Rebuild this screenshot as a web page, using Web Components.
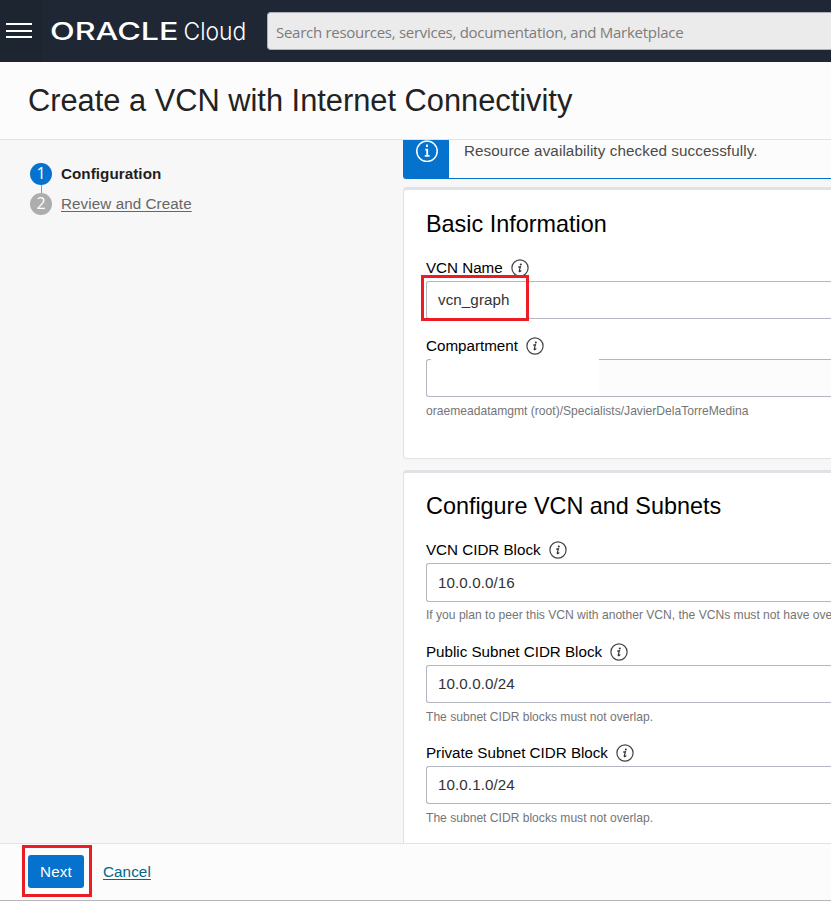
<!DOCTYPE html>
<html lang="en">
<head>
<meta charset="utf-8">
<title>Create a VCN with Internet Connectivity</title>
<style>
html,body{margin:0;height:100%}
body{overflow:hidden;background:#f7f7f7;font-family:"Liberation Sans",Arial,sans-serif;font-size:15.2px;color:#000}
</style>
</head>
<body>
<vcn-wizard></vcn-wizard>
<script>
function define(name, html) {
  const tpl = document.createElement('template');
  tpl.innerHTML = html;
  customElements.define(name, class extends HTMLElement {
    constructor() {
      super();
      this.attachShadow({mode: 'open'}).appendChild(tpl.content.cloneNode(true));
    }
  });
}

define('info-icon', `
<style>:host{display:block;width:18px;height:18px}svg{display:block}</style>
<svg width="18" height="18" viewBox="0 0 18 18" fill="none" stroke="#454545">
  <circle cx="9" cy="9" r="8.1" stroke-width="1.2"/>
  <circle cx="9.8" cy="5.4" r="1" fill="#333" stroke="none"/>
  <path d="M7.2 8.2L9.4 7.8L8.2 12.1Q8.1 13 9.1 12.4L10.3 11.6" stroke="#333" stroke-width="1.2"/>
</svg>`);

define('cloud-header', `
<style>
:host{display:flex;align-items:center;height:62px;background:#1e2733;flex:none}
.menu{width:42px;height:62px;box-sizing:border-box;padding:23px 0 0 6px;background:#1d2531}
svg{display:block;flex:none}
.search{flex:1;box-sizing:border-box;height:38px;margin-left:17px;border:1px solid #aab3bb;border-right:0;border-radius:4px 0 0 4px;background:#ebebeb;
  padding-left:8px;font:15px/39px "Open Sans",sans-serif;letter-spacing:-.28px;color:#7c7c7c;white-space:nowrap}
</style>
<div class="menu"><svg width="26" height="15" fill="#fff"><path d="M0 0h26v2H0zM0 7h26v2H0zM0 13h26v2H0z"/></svg></div>
<svg width="208" height="62" fill="#fff">
  <text x="8" y="40" font-family="Inter,sans-serif" font-weight="500" font-size="23.6" textLength="128.5" lengthAdjust="spacingAndGlyphs">ORACLE</text>
  <text x="141.5" y="40" font-family="Inter,sans-serif" font-weight="300" font-size="24.4" textLength="62.8" lengthAdjust="spacingAndGlyphs">Cloud</text>
</svg>
<div class="search">Search resources, services, documentation, and Marketplace</div>`);

define('page-title', `
<style>:host{display:block;box-sizing:border-box;height:78px;flex:none;background:#fcfcfc;border-bottom:1px solid #e2e2e2;padding-left:28px}
h1{margin:0;font-size:30.8px;font-weight:400;line-height:77px;color:#222;white-space:nowrap}</style>
<h1><slot></slot></h1>`);

define('wizard-step', `
<style>
:host{display:flex;height:22px;gap:9px;color:#666;white-space:nowrap}
.n{width:22px;height:22px;border-radius:50%;background:#adadad;color:#fff;text-align:center;font:16px/21px "Open Sans",sans-serif}
.t{line-height:22px;text-decoration:underline;text-underline-offset:2px;letter-spacing:.09px}
:host([active]){color:#1e1e1e}
:host([active]) .n{background:#0572ce}
:host([active]) .t{font-weight:700;text-decoration:none;letter-spacing:.06px}
</style>
<div class="n"><slot name="n"></slot></div><div class="t"><slot></slot></div>`);

define('step-list', `
<style>:host{display:flex;flex-direction:column;width:403px;flex:none;box-sizing:border-box;padding:23px 0 0 30px}
.line{width:1px;height:8px;margin-left:11px;background:#999}</style>
<slot name="first"></slot><div class="line"></div><slot></slot>`);

define('info-banner', `
<style>
:host{display:flex;flex:none;box-sizing:border-box;height:39px;background:#fcfcfc;border-bottom:1px solid #0572ce;border-bottom-left-radius:3px;overflow:hidden}
.i{width:46px;background:#0572ce;height:39px}
svg{display:block;margin-left:13px}
p{margin:0 0 0 15px;line-height:22px;color:#4a4a4a;letter-spacing:.1px;white-space:nowrap}
</style>
<div class="i"><svg width="22" height="22" fill="none" stroke="#fff"><circle cx="11" cy="11.3" r="10.2" stroke-width="1.5"/><path d="M11 4.5v2.5M9.3 9.6h1.9v6.2M8.8 15.8h4.8" stroke-width="1.8"/></svg></div>
<p><slot></slot></p>`);

define('form-card', `
<style>
:host{display:flex;flex-direction:column;box-sizing:border-box;border:1px solid #e1e2e5;border-right:0;border-top:3px solid #e1e2e5;border-radius:4px 0 0 4px;background:#fff;padding:var(--top,20px) 0 0 22px;flex:none}
h2{margin:0 0 17px;font-weight:400;font-size:23.4px;line-height:28px;white-space:nowrap}
</style>
<h2><slot name="title"></slot></h2><slot></slot>`);

define('form-field', `
<style>
:host{display:block;white-space:nowrap}
.label{display:flex;align-items:center;gap:8px;height:26px;letter-spacing:-.015px}
.label span{line-height:26px}
.box{box-sizing:border-box;height:var(--h,38px);border:1px solid #b1b6bf;border-right:0;border-radius:3px 0 0 3px;background:#fff;padding-left:11px;line-height:var(--lh,36px);color:#333;letter-spacing:.07px}
.hint{height:18px;margin-top:var(--hint,5px);font-size:12.1px;line-height:18px;color:#757575;letter-spacing:-.005px}
:host([disabled]) .box{background:linear-gradient(90deg,#fff 172px,#fcfcfc 172px);padding-left:0;display:flex}
.cover{display:none}
:host([disabled]) .cover{display:block;width:168px;height:37px;margin:-1px 0 0 4px;background:#fff}
</style>
<div class="label"><span><slot name="label"></slot></span><info-icon></info-icon></div>
<div class="box"><div class="cover"></div><slot></slot></div>
<div class="hint"><slot name="hint"></slot></div>`);

define('red-frame', `
<style>:host{position:absolute;box-sizing:border-box;border:3px solid #ed1c24;pointer-events:none}</style>`);

define('wizard-footer', `
<style>
:host{display:flex;align-items:center;box-sizing:border-box;height:58px;flex:none;border-top:1px solid #e2e2e2;border-bottom:1px solid #b5b6bb;background:#fcfcfc;padding:0 0 2px 28px;position:relative}
button{border:0;padding:0;width:56px;height:33px;border-radius:3px;background:#0572ce;color:#fff;font:inherit;letter-spacing:.15px}
a{margin-left:19px;color:#00688c;text-decoration:underline;text-underline-offset:2px;letter-spacing:.1px}
red-frame{left:22px;top:1px;width:70px;height:52px}
</style>
<button>Next</button><a>Cancel</a><red-frame></red-frame>`);

define('vcn-wizard', `
<style>
:host{display:flex;flex-direction:column;height:901px;width:100%}
main{flex:1;min-height:0;display:flex;overflow:hidden}
.content{flex:1;min-width:0;overflow:hidden;display:flex;flex-direction:column}
.basic{height:272px;margin:8px 0 11px}
.subnets{height:420px;--top:19px}
.name{height:78px;position:relative}
.name red-frame{left:-5px;top:20px;width:108px;height:46px}
.cidr{--h:39px;--lh:38px;--hint:4px;margin-bottom:15px}
.public{margin-bottom:14px}
</style>
<cloud-header></cloud-header>
<page-title>Create a VCN with Internet Connectivity</page-title>
<main>
  <step-list>
    <wizard-step slot="first" active><span slot="n">1</span>Configuration</wizard-step>
    <wizard-step><span slot="n">2</span>Review and Create</wizard-step>
  </step-list>
  <div class="content">
    <info-banner>Resource availability checked successfully.</info-banner>
    <form-card class="basic"><span slot="title">Basic Information</span>
      <div class="name"><form-field><span slot="label">VCN Name</span>vcn_graph</form-field><red-frame></red-frame></div>
      <form-field disabled><span slot="label">Compartment</span><span slot="hint">oraemeadatamgmt (root)/Specialists/JavierDelaTorreMedina</span></form-field>
    </form-card>
    <form-card class="subnets"><span slot="title">Configure VCN and Subnets</span>
      <form-field class="cidr"><span slot="label">VCN CIDR Block</span>10.0.0.0/16<span slot="hint">If you plan to peer this VCN with another VCN, the VCNs must not have overlapping CIDRs.</span></form-field>
      <form-field class="public"><span slot="label">Public Subnet CIDR Block</span>10.0.0.0/24<span slot="hint">The subnet CIDR blocks must not overlap.</span></form-field>
      <form-field><span slot="label">Private Subnet CIDR Block</span>10.0.1.0/24<span slot="hint">The subnet CIDR blocks must not overlap.</span></form-field>
    </form-card>
  </div>
</main>
<wizard-footer></wizard-footer>`);
</script>
</body>
</html>
